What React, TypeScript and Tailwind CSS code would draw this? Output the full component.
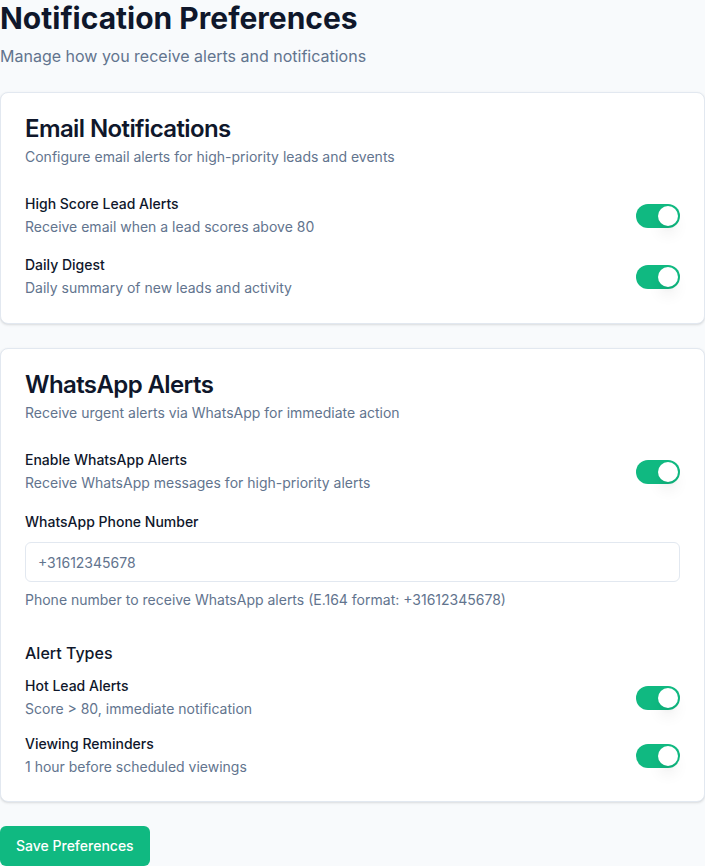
import { useState } from 'react';

type ToggleProps = { on: boolean; onChange: (v: boolean) => void };

const Toggle = ({ on, onChange }: ToggleProps) => (
  <button
    type="button"
    role="switch"
    aria-checked={on}
    onClick={() => onChange(!on)}
    className={`relative inline-flex h-6 w-11 shrink-0 items-center rounded-full transition-colors ${on ? 'bg-[#10b981]' : 'bg-slate-200'}`}
  >
    <span
      className={`block h-5 w-5 rounded-full bg-white shadow-lg transition-transform ${on ? 'translate-x-[22px]' : 'translate-x-[2px]'}`}
    />
  </button>
);

type RowProps = { label: string; desc: string; on: boolean; onChange: (v: boolean) => void };

const SettingRow = ({ label, desc, on, onChange }: RowProps) => (
  <div className="flex items-center justify-between">
    <div>
      <div className="text-sm font-medium leading-5 text-slate-900">{label}</div>
      <div className="mt-[3px] text-sm leading-5 text-slate-500">{desc}</div>
    </div>
    <Toggle on={on} onChange={onChange} />
  </div>
);

const CardHeader = ({ title, desc }: { title: string; desc: string }) => (
  <div className="px-6 pt-6">
    <h2 className="text-2xl font-semibold leading-none tracking-tight text-slate-900">{title}</h2>
    <p className="mt-1.5 text-sm leading-5 text-slate-500">{desc}</p>
  </div>
);

export default function App() {
  const [prefs, setPrefs] = useState({
    highScore: true,
    digest: true,
    whatsapp: true,
    hotLead: true,
    viewing: true,
  });
  const [phone, setPhone] = useState('');

  const set = (key: keyof typeof prefs) => (v: boolean) => setPrefs((p) => ({ ...p, [key]: v }));

  return (
    <div className="min-h-screen bg-[#f8fafc] pb-10 font-['Inter',sans-serif] text-slate-900">
      {/* Header */}
      <h1 className="text-3xl font-bold leading-9 text-slate-900">Notification Preferences</h1>
      <p className="mt-2 text-base leading-6 text-slate-500">Manage how you receive alerts and notifications</p>

      {/* Email */}
      <section className="mt-6 rounded-lg border border-slate-200 bg-white shadow-sm">
        <CardHeader title="Email Notifications" desc="Configure email alerts for high-priority leads and events" />
        <div className="flex flex-col gap-[18px] px-6 pb-[25px] pt-[27px]">
          <SettingRow
            label="High Score Lead Alerts"
            desc="Receive email when a lead scores above 80"
            on={prefs.highScore}
            onChange={set('highScore')}
          />
          <SettingRow
            label="Daily Digest"
            desc="Daily summary of new leads and activity"
            on={prefs.digest}
            onChange={set('digest')}
          />
        </div>
      </section>

      {/* WhatsApp */}
      <section className="mt-6 rounded-lg border border-slate-200 bg-white shadow-sm">
        <CardHeader title="WhatsApp Alerts" desc="Receive urgent alerts via WhatsApp for immediate action" />
        <div className="px-6 pb-6 pt-[27px]">
          <SettingRow
            label="Enable WhatsApp Alerts"
            desc="Receive WhatsApp messages for high-priority alerts"
            on={prefs.whatsapp}
            onChange={set('whatsapp')}
          />

          <div className="mt-[19px]">
            <label htmlFor="phone" className="block text-sm font-medium leading-5 text-slate-900">
              WhatsApp Phone Number
            </label>
            <input
              id="phone"
              type="tel"
              value={phone}
              onChange={(e) => setPhone(e.target.value)}
              placeholder="+31612345678"
              className="mt-[10px] h-10 w-full rounded-md border border-slate-200 bg-white px-3 text-sm text-slate-900 placeholder:text-slate-500 focus:outline-none"
            />
            <p className="mt-2 text-sm leading-5 text-slate-500">
              Phone number to receive WhatsApp alerts (E.164 format: +31612345678)
            </p>
          </div>

          <h3 className="mt-[31px] text-base font-medium leading-6 text-slate-900">Alert Types</h3>
          <div className="mt-[11px] flex flex-col gap-[15px]">
            <SettingRow
              label="Hot Lead Alerts"
              desc="Score > 80, immediate notification"
              on={prefs.hotLead}
              onChange={set('hotLead')}
            />
            <SettingRow
              label="Viewing Reminders"
              desc="1 hour before scheduled viewings"
              on={prefs.viewing}
              onChange={set('viewing')}
            />
          </div>
        </div>
      </section>

      <button
        type="button"
        className="mt-6 h-10 rounded-md bg-[#10b981] px-4 text-sm font-medium text-white hover:bg-[#059669]"
      >
        Save Preferences
      </button>
    </div>
  );
}
